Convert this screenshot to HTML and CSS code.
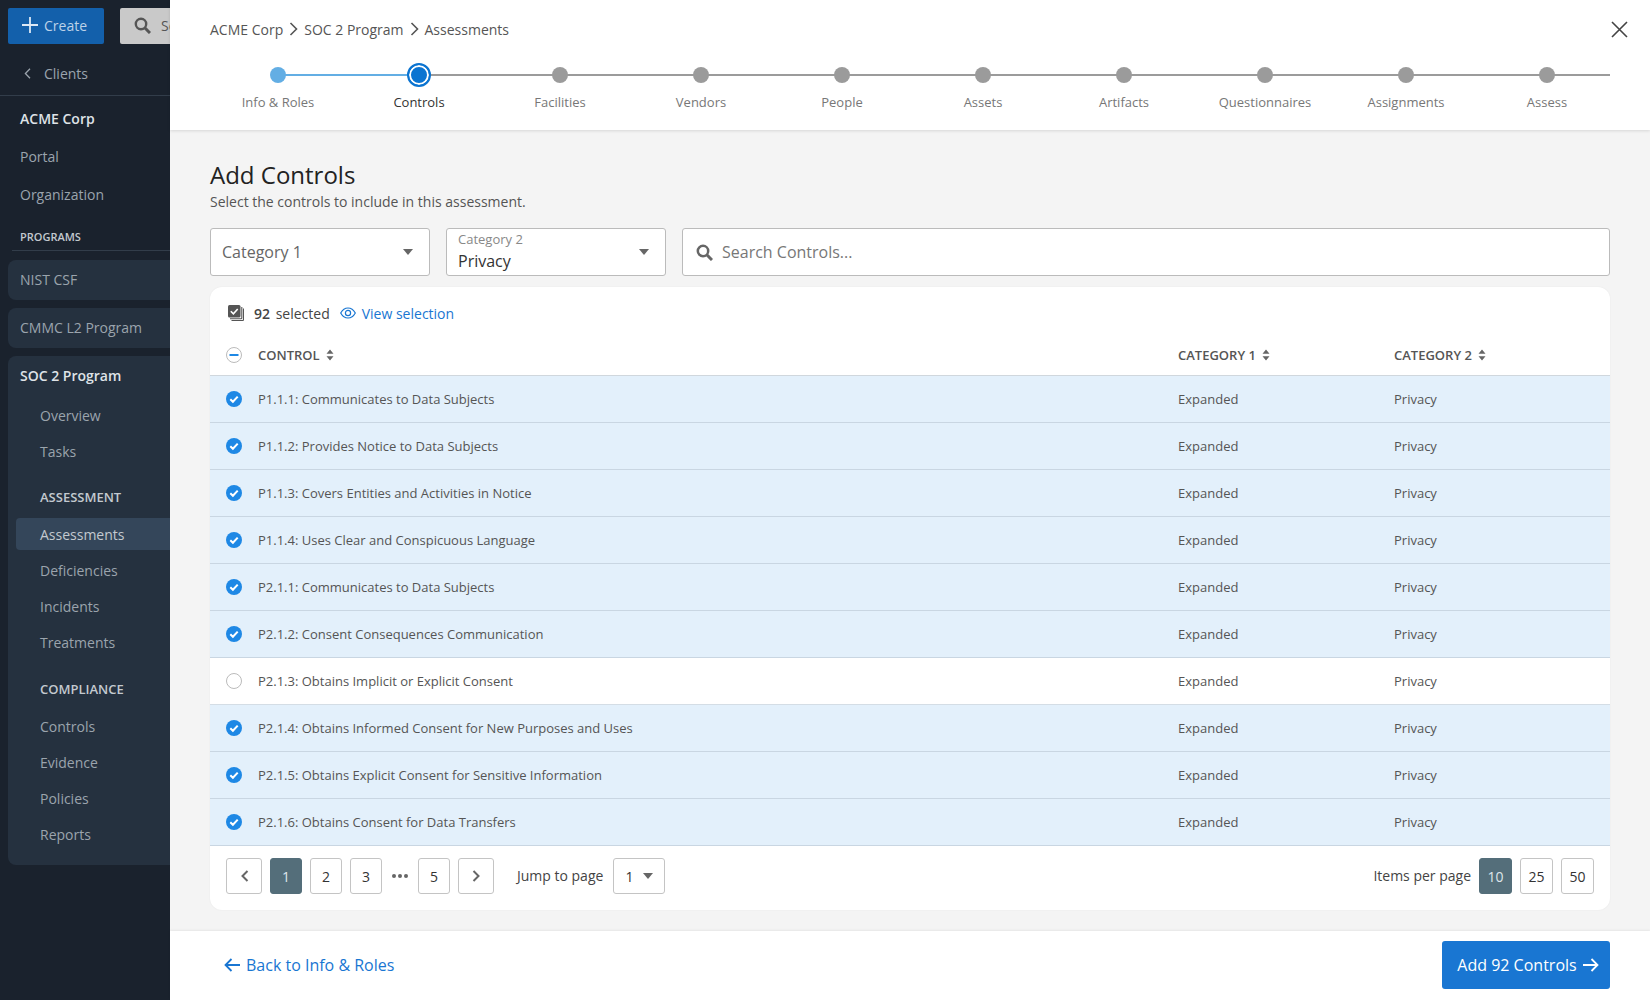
FILE: index.html
```html
<!DOCTYPE html>
<html lang="en">
<head>
    <meta charset="UTF-8">
    <title>Add Controls</title>
    <link rel="stylesheet" href="styles.css">
</head>
<body>
    <svg class="defs" width="0" height="0">
        <symbol id="check-on" viewBox="0 0 16 16">
            <circle cx="8" cy="8" r="8" fill="#1e88e5"/>
            <path d="M4.300 8.300l2.600 2.500 4.800-5.200" fill="none" stroke="#fff" stroke-width="2"/>
        </symbol>
        <symbol id="check-off" viewBox="0 0 16 16">
            <circle cx="8" cy="8" r="7.500" fill="#fff" stroke="#bbb"/>
        </symbol>
        <symbol id="check-some" viewBox="0 0 16 16">
            <circle cx="8" cy="8" r="7.500" fill="#fff" stroke="#bbb"/>
            <path d="M3.500 8h9" stroke="#1e88e5" stroke-width="2"/>
        </symbol>
        <symbol id="sort" viewBox="0 0 8 12">
            <path d="M4 .5l3.500 4.200h-7zM4 11.500L.5 7.300h7z" fill="#666"/>
        </symbol>
        <symbol id="crumb" viewBox="0 0 9 14">
            <path d="M1.500 1l6 6-6 6" fill="none" stroke="#555" stroke-width="1.600"/>
        </symbol>
        <symbol id="page-left" viewBox="0 0 9 14">
            <path d="M7.500 2L2.500 7l5 5" fill="none" stroke="#666" stroke-width="2"/>
        </symbol>
        <symbol id="page-right" viewBox="0 0 9 14">
            <path d="M1.500 2l5 5-5 5" fill="none" stroke="#666" stroke-width="2"/>
        </symbol>
        <symbol id="caret" viewBox="0 0 10 6">
            <path d="M0 0h10L5 6z" fill="#666"/>
        </symbol>
    </svg>

    <div class="app">
        <!-- left nav, cut off by the drawer -->
        <aside class="sidebar">
            <div class="top-bar">
                <div class="create-btn">
                    <svg width="16" height="16" viewBox="0 0 16 16"><path d="M8 0v16M0 8h16" stroke="#dce8f5" stroke-width="1.800"/></svg>
                    <span>Create</span>
                </div>
                <div class="search-btn">
                    <svg width="17" height="17" viewBox="0 0 17 17"><circle cx="7" cy="7" r="5.200" fill="none" stroke="#555" stroke-width="2.400"/><path d="M11 11l5 5" stroke="#555" stroke-width="3"/></svg>
                    <span>Search</span>
                </div>
            </div>
            <div class="back-row">
                <svg width="7" height="11" viewBox="0 0 7 11"><path d="M6 .8L1.400 5.500 6 10.200" fill="none" stroke="#9ba4ad" stroke-width="1.300"/></svg>
                <span>Clients</span>
            </div>
            <div class="side-group">
                <div class="side-row side-strong">ACME Corp</div>
                <div class="side-row">Portal</div>
                <div class="side-row">Organization</div>
            </div>
            <div class="side-section">PROGRAMS</div>
            <div class="prog-card">NIST CSF</div>
            <div class="prog-card">CMMC L2 Program</div>
            <div class="prog-open">
                <div class="prog-title">SOC 2 Program</div>
                <div class="sub-item">Overview</div>
                <div class="sub-item">Tasks</div>
                <div class="sub-head">ASSESSMENT</div>
                <div class="sub-item sub-active">Assessments</div>
                <div class="sub-item">Deficiencies</div>
                <div class="sub-item">Incidents</div>
                <div class="sub-item">Treatments</div>
                <div class="sub-head">COMPLIANCE</div>
                <div class="sub-item">Controls</div>
                <div class="sub-item">Evidence</div>
                <div class="sub-item">Policies</div>
                <div class="sub-item">Reports</div>
            </div>
        </aside>

        <main class="drawer">
            <header class="drawer-head">
                <div class="crumb-row">
                    <div class="crumbs">
                        <span>ACME Corp</span>
                        <svg width="9" height="14"><use href="#crumb"/></svg>
                        <span>SOC 2 Program</span>
                        <svg width="9" height="14"><use href="#crumb"/></svg>
                        <span>Assessments</span>
                    </div>
                    <svg class="close-x" width="17" height="17" viewBox="0 0 17 17"><path d="M1 1l15 15M16 1L1 16" stroke="#444" stroke-width="1.600"/></svg>
                </div>
                <div class="stepper">
                    <div class="step step-done"><div class="dot"></div><div class="step-label">Info &amp; Roles</div></div>
                    <div class="step step-active"><div class="dot"></div><div class="step-label">Controls</div></div>
                    <div class="step"><div class="dot"></div><div class="step-label">Facilities</div></div>
                    <div class="step"><div class="dot"></div><div class="step-label">Vendors</div></div>
                    <div class="step"><div class="dot"></div><div class="step-label">People</div></div>
                    <div class="step"><div class="dot"></div><div class="step-label">Assets</div></div>
                    <div class="step"><div class="dot"></div><div class="step-label">Artifacts</div></div>
                    <div class="step"><div class="dot"></div><div class="step-label">Questionnaires</div></div>
                    <div class="step"><div class="dot"></div><div class="step-label">Assignments</div></div>
                    <div class="step"><div class="dot"></div><div class="step-label">Assess</div></div>
                </div>
            </header>

            <section class="drawer-body">
                <h1>Add Controls</h1>
                <p class="subtitle">Select the controls to include in this assessment.</p>

                <div class="filters">
                    <div class="select-box">
                        <span class="select-plain">Category 1</span>
                        <svg width="10" height="6"><use href="#caret"/></svg>
                    </div>
                    <div class="select-box">
                        <div class="select-stack">
                            <span class="select-label">Category 2</span>
                            <span class="select-value">Privacy</span>
                        </div>
                        <svg width="10" height="6"><use href="#caret"/></svg>
                    </div>
                    <div class="search-box">
                        <svg width="17" height="17" viewBox="0 0 17 17"><circle cx="7" cy="7" r="5.200" fill="none" stroke="#666" stroke-width="2.500"/><path d="M11 11l5 5" stroke="#666" stroke-width="3"/></svg>
                        <span>Search Controls...</span>
                    </div>
                </div>

                <div class="table-card">
                    <div class="table-tools">
                        <svg width="16" height="16" viewBox="0 0 16 16">
                            <path d="M3.500 15.500h11a1 1 0 0 0 1-1v-11" fill="none" stroke="#555" stroke-width="1.100"/>
                            <path d="M2 13.800h11a.8.8 0 0 0 .8-.8V2" fill="none" stroke="#555" stroke-width="1.100"/>
                            <rect x="0" y="0" width="12.500" height="12.500" rx="1.500" fill="#555"/>
                            <path d="M2.800 6.200l2.600 2.600 4.300-4.800" fill="none" stroke="#fff" stroke-width="1.600"/>
                        </svg>
                        <span class="sel-count"><b>92</b> selected</span>
                        <svg class="eye" width="16" height="12" viewBox="0 0 16 12">
                            <path d="M.7 6C2.500 2.700 5 1 8 1s5.500 1.700 7.300 5C13.500 9.300 11 11 8 11S2.500 9.300.7 6z" fill="none" stroke="#1976d2" stroke-width="1.200"/>
                            <circle cx="8" cy="6" r="2.600" fill="none" stroke="#1976d2" stroke-width="1.200"/>
                        </svg>
                        <span class="link">View selection</span>
                    </div>

                    <div class="row row-head">
                        <svg width="16" height="16"><use href="#check-some"/></svg>
                        <div class="th">CONTROL <svg width="8" height="12"><use href="#sort"/></svg></div>
                        <div class="th">CATEGORY 1 <svg width="8" height="12"><use href="#sort"/></svg></div>
                        <div class="th">CATEGORY 2 <svg width="8" height="12"><use href="#sort"/></svg></div>
                    </div>
                    <div class="row row-on"><svg width="16" height="16"><use href="#check-on"/></svg><div>P1.1.1: Communicates to Data Subjects</div><div>Expanded</div><div>Privacy</div></div>
                    <div class="row row-on"><svg width="16" height="16"><use href="#check-on"/></svg><div>P1.1.2: Provides Notice to Data Subjects</div><div>Expanded</div><div>Privacy</div></div>
                    <div class="row row-on"><svg width="16" height="16"><use href="#check-on"/></svg><div>P1.1.3: Covers Entities and Activities in Notice</div><div>Expanded</div><div>Privacy</div></div>
                    <div class="row row-on"><svg width="16" height="16"><use href="#check-on"/></svg><div>P1.1.4: Uses Clear and Conspicuous Language</div><div>Expanded</div><div>Privacy</div></div>
                    <div class="row row-on"><svg width="16" height="16"><use href="#check-on"/></svg><div>P2.1.1: Communicates to Data Subjects</div><div>Expanded</div><div>Privacy</div></div>
                    <div class="row row-on"><svg width="16" height="16"><use href="#check-on"/></svg><div>P2.1.2: Consent Consequences Communication</div><div>Expanded</div><div>Privacy</div></div>
                    <div class="row"><svg width="16" height="16"><use href="#check-off"/></svg><div>P2.1.3: Obtains Implicit or Explicit Consent</div><div>Expanded</div><div>Privacy</div></div>
                    <div class="row row-on"><svg width="16" height="16"><use href="#check-on"/></svg><div>P2.1.4: Obtains Informed Consent for New Purposes and Uses</div><div>Expanded</div><div>Privacy</div></div>
                    <div class="row row-on"><svg width="16" height="16"><use href="#check-on"/></svg><div>P2.1.5: Obtains Explicit Consent for Sensitive Information</div><div>Expanded</div><div>Privacy</div></div>
                    <div class="row row-on"><svg width="16" height="16"><use href="#check-on"/></svg><div>P2.1.6: Obtains Consent for Data Transfers</div><div>Expanded</div><div>Privacy</div></div>

                    <div class="pager">
                        <div class="page-btn page-arrow"><svg width="9" height="14"><use href="#page-left"/></svg></div>
                        <div class="page-btn page-on">1</div>
                        <div class="page-btn">2</div>
                        <div class="page-btn">3</div>
                        <div class="page-dots"><i></i><i></i><i></i></div>
                        <div class="page-btn">5</div>
                        <div class="page-btn page-arrow"><svg width="9" height="14"><use href="#page-right"/></svg></div>
                        <span class="jump-label">Jump to page</span>
                        <div class="jump-select"><span>1</span><svg width="10" height="6"><use href="#caret"/></svg></div>
                        <span class="per-label">Items per page</span>
                        <div class="page-btn per-btn page-on">10</div>
                        <div class="page-btn per-btn">25</div>
                        <div class="page-btn per-btn">50</div>
                    </div>
                </div>
            </section>

            <footer class="drawer-foot">
                <div class="back-link">
                    <svg width="16" height="14" viewBox="0 0 16 14"><path d="M16 7H1.500M7.500 1l-6 6 6 6" fill="none" stroke="#1976d2" stroke-width="1.800"/></svg>
                    <span>Back to Info &amp; Roles</span>
                </div>
                <div class="next-btn">
                    <span>Add 92 Controls</span>
                    <svg width="16" height="14" viewBox="0 0 16 14"><path d="M0 7h14.500M8.500 1l6 6-6 6" fill="none" stroke="#fff" stroke-width="1.800"/></svg>
                </div>
            </footer>
        </main>
    </div>
</body>
</html>
```

FILE: styles.css
```css
* {
    box-sizing: border-box;
}
body {
    margin: 0;
    font-family: "Open Sans", "Noto Sans", sans-serif;
    font-size: 14px;
    color: #555;
    background-color: #f4f4f4;
}
.defs {
    position: absolute;
}
.app {
    display: flex;
    height: 1000px;
    overflow: hidden;
}

/* sidebar */
.sidebar {
    width: 170px;
    flex-shrink: 0;
    overflow: hidden;
    background-color: #1a222d;
    color: #9ba4ad;
}
.top-bar {
    display: flex;
    gap: 16px;
    padding: 8px 0 0 8px;
    width: 300px;
}
.create-btn {
    display: flex;
    align-items: center;
    gap: 6px;
    width: 96px;
    height: 36px;
    padding: 0 0 2px 14px;
    border-radius: 2px;
    background-color: #1360ab;
    color: #bcd2e8;
}
.search-btn {
    display: flex;
    align-items: center;
    gap: 10px;
    width: 150px;
    height: 36px;
    padding: 0 0 2px 14px;
    border-radius: 2px;
    background-color: #c9c9c9;
    color: #555;
}
.back-row {
    display: flex;
    align-items: center;
    gap: 13px;
    height: 44px;
    margin-top: 8px;
    padding: 0 0 0 24px;
    border-bottom: 1px solid #323d4a;
}
.side-group {
    padding-top: 3px;
}
.side-row {
    display: flex;
    align-items: center;
    height: 38px;
    padding-left: 20px;
}
.side-strong {
    color: #dfe3e7;
    font-weight: 600;
}
.side-section {
    height: 38px;
    margin-left: 12px;
    padding: 16px 0 0 8px;
    border-bottom: 1px solid #323d4a;
    color: #c3c9cf;
    font-size: 11px;
    font-weight: 600;
}
.prog-card {
    display: flex;
    align-items: center;
    height: 40px;
    margin: 8px 0 0 8px;
    padding: 0 0 2px 12px;
    border-radius: 8px 0 0 8px;
    background-color: #25313f;
}
.side-section + .prog-card {
    margin-top: 9px;
}
.prog-open {
    margin: 8px 0 0 8px;
    padding-bottom: 13px;
    border-radius: 8px 0 0 8px;
    background-color: #25313f;
}
.prog-title {
    display: flex;
    align-items: center;
    height: 40px;
    margin-bottom: 2px;
    padding: 0 0 2px 12px;
    color: #dfe3e7;
    font-weight: 600;
}
.sub-item {
    display: flex;
    align-items: center;
    height: 36px;
    padding-left: 32px;
}
.sub-item:nth-child(2),
.sub-item:nth-child(3) {
    padding-bottom: 2px;
}
.sub-head {
    display: flex;
    align-items: center;
    height: 36px;
    margin: 10px 0 2px;
    padding-left: 32px;
    color: #c3c9cf;
    font-size: 13px;
    font-weight: 600;
}
.sub-head:nth-child(4) {
    padding-bottom: 2px;
}
.sub-head:nth-child(9) {
    padding-top: 2px;
}
.sub-active {
    height: 32px;
    margin: 2px 0 2px 8px;
    padding: 1px 0 0 24px;
    border-radius: 4px 0 0 4px;
    background-color: #34465a;
    color: #c3c9cf;
}

/* drawer */
.drawer {
    flex: 1;
    display: flex;
    flex-direction: column;
    min-width: 0;
}
.drawer-head {
    position: relative;
    height: 130px;
    background-color: #fff;
    box-shadow: 0 1px 3px rgba(0, 0, 0, 0.12);
}
.crumb-row {
    display: flex;
    align-items: center;
    justify-content: space-between;
    height: 58px;
    padding: 0 22px 0 40px;
}
.crumbs {
    display: flex;
    align-items: center;
    gap: 6px;
}
.stepper {
    display: flex;
    margin-left: 37.500px;
    padding-top: 5px;
}
.step {
    position: relative;
    display: flex;
    flex-direction: column;
    width: 141px;
    text-align: center;
}
.step::after {
    content: "";
    position: absolute;
    top: 11px;
    left: 50%;
    width: 100%;
    height: 2px;
    background-color: #9b9b9b;
}
.step:last-child::after {
    width: 63px;
}
.step-done::after {
    background-color: #63aee4;
}
.dot {
    position: relative;
    z-index: 1;
    width: 16px;
    height: 16px;
    margin: 4px auto;
    border-radius: 50%;
    background-color: #9b9b9b;
}
.step-done .dot {
    background-color: #63aee4;
}
.step-active .dot {
    width: 24px;
    height: 24px;
    margin: 0 auto;
    border: 2px solid #0b74d1;
    background-color: #0b74d1;
    box-shadow: inset 0 0 0 2px #fff;
}
.step-label {
    margin-top: 6px;
    color: #777;
    font-size: 13px;
    line-height: 18px;
}
.step-active .step-label {
    color: #333;
}
.drawer-body {
    flex: 1;
    padding: 28px 40px 0;
}
h1 {
    margin: 0 0 1px;
    color: #222;
    font-size: 24px;
    font-weight: 400;
    line-height: 34px;
}
.subtitle {
    margin: 0;
    line-height: 18px;
}
.filters {
    display: flex;
    gap: 16px;
    margin-top: 17px;
}
.select-box {
    display: flex;
    align-items: center;
    justify-content: space-between;
    width: 220px;
    height: 48px;
    padding: 0 16px 0 11px;
    border: 1px solid #bbb;
    border-radius: 3px;
    background-color: #fff;
}
.select-plain {
    color: #666;
    font-size: 16px;
}
.select-stack {
    display: flex;
    flex-direction: column;
    margin-top: -1px;
}
.select-label {
    color: #888;
    font-size: 13px;
    line-height: 19px;
}
.select-value {
    padding-top: 1px;
    color: #333;
    font-size: 16px;
    line-height: 23px;
}
.search-box {
    flex: 1;
    display: flex;
    align-items: center;
    gap: 9px;
    height: 48px;
    padding-left: 13px;
    border: 1px solid #bbb;
    border-radius: 3px;
    background-color: #fff;
    color: #777;
    font-size: 16px;
}
.search-box span {
    padding-bottom: 1px;
}
.table-card {
    margin-top: 11px;
    height: 623px;
    border-radius: 12px;
    background-color: #fff;
    box-shadow: 0 0 2px rgba(0, 0, 0, 0.06);
    overflow: hidden;
}
.table-tools {
    display: flex;
    align-items: center;
    height: 48px;
    padding: 4px 0 0 18px;
}
.sel-count {
    margin-left: 10px;
    color: #444;
}
.sel-count b {
    margin-right: 2px;
    font-weight: 600;
}
.eye {
    margin-left: 10px;
}
.link {
    margin-left: 6px;
    color: #1976d2;
}
.row {
    display: grid;
    grid-template-columns: 32px 920px 216px 1fr;
    align-items: center;
    height: 47px;
    padding-left: 16px;
    border-bottom: 1px solid #d4dde5;
    font-size: 13px;
}
.row-head {
    height: 41px;
    border-bottom-color: #d0d7dd;
}
.row-on {
    background-color: #e3f0fb;
    border-bottom-color: #c9d6e2;
}
.th {
    display: flex;
    align-items: center;
    gap: 6px;
    font-weight: 600;
}
.pager {
    display: flex;
    align-items: center;
    gap: 8px;
    padding: 12px 16px 0;
}
.page-btn {
    display: flex;
    align-items: center;
    justify-content: center;
    width: 32px;
    height: 36px;
    border: 1px solid #c4c4c4;
    border-radius: 3px;
    color: #333;
}
.page-arrow {
    width: 36px;
}
.per-btn {
    width: 33px;
}
.page-on {
    border-color: #546e7a;
    background-color: #546e7a;
    color: #dfe6ea;
}
.page-dots {
    display: flex;
    justify-content: center;
    gap: 2px;
    width: 20px;
}
.page-dots i {
    width: 4px;
    height: 4px;
    border-radius: 50%;
    background-color: #666;
}
.jump-label {
    margin-left: 15px;
    padding-bottom: 2px;
    color: #444;
}
.jump-select {
    display: flex;
    align-items: center;
    justify-content: space-between;
    width: 52px;
    height: 36px;
    margin-left: 2px;
    padding: 0 11px 0 11px;
    border: 1px solid #c4c4c4;
    border-radius: 3px;
    color: #333;
}
.per-label {
    margin-left: auto;
    padding-bottom: 2px;
    color: #444;
}
.drawer-foot {
    display: flex;
    align-items: center;
    justify-content: space-between;
    height: 69px;
    padding: 0 40px 2px 54px;
    background-color: #fff;
    box-shadow: 0 -1px 2px rgba(0, 0, 0, 0.06);
}
.back-link {
    display: flex;
    align-items: center;
    gap: 6px;
    color: #1976d2;
    font-size: 16px;
}
.next-btn {
    display: flex;
    align-items: center;
    justify-content: center;
    gap: 6px;
    width: 168px;
    height: 48px;
    padding-left: 4px;
    border-radius: 3px;
    background-color: #1976d2;
    color: #fff;
    font-size: 16px;
}
```
